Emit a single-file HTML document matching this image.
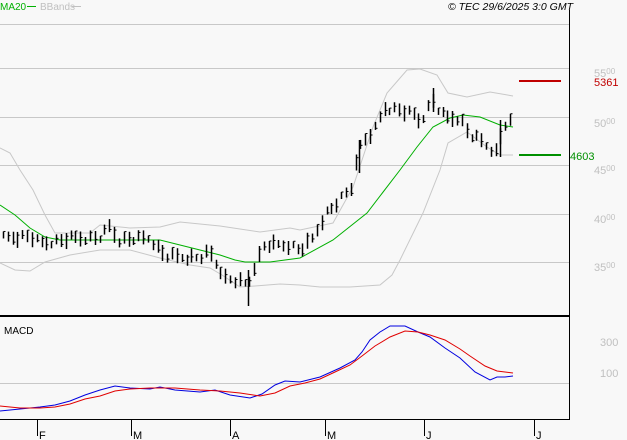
<!DOCTYPE html>
<html><head><meta charset="utf-8"><style>
html,body{margin:0;padding:0;background:#f8f8f8;width:627px;height:440px;overflow:hidden}
svg{display:block}
text{font-family:"Liberation Sans",sans-serif}
</style></head><body>
<svg id="s" width="627" height="440" xmlns="http://www.w3.org/2000/svg">
<rect width="627" height="440" fill="#f8f8f8"/>
<g stroke="#c8c8c8" stroke-width="1">
<line x1="0" y1="24.5" x2="569" y2="24.5"/>
<line x1="0" y1="68.5" x2="569" y2="68.5"/>
<line x1="0" y1="117.5" x2="569" y2="117.5"/>
<line x1="0" y1="165.5" x2="569" y2="165.5"/>
<line x1="0" y1="214.5" x2="569" y2="214.5"/>
<line x1="0" y1="262.5" x2="569" y2="262.5"/>
<line x1="0" y1="383.5" x2="569" y2="383.5"/>
</g>
<line x1="569.5" y1="10" x2="569.5" y2="420" stroke="#000"/>
<line x1="0" y1="316" x2="569" y2="316" stroke="#000" stroke-width="2"/>
<line x1="0" y1="419.5" x2="569" y2="419.5" stroke="#000"/>
<g stroke="#000"><line x1="37.5" y1="420" x2="37.5" y2="436"/><line x1="131.5" y1="420" x2="131.5" y2="436"/><line x1="230.5" y1="420" x2="230.5" y2="436"/><line x1="325.5" y1="420" x2="325.5" y2="436"/><line x1="424.5" y1="420" x2="424.5" y2="436"/><line x1="534.5" y1="420" x2="534.5" y2="436"/></g>
<g font-size="11" fill="#000"><text x="39" y="439">F</text><text x="133" y="439">M</text><text x="232" y="439">A</text><text x="327" y="439">M</text><text x="426" y="439">J</text><text x="536" y="439">J</text></g>
<text x="0" y="10" font-size="10" fill="#00b000">MA20</text><line x1="27" y1="6.5" x2="36" y2="6.5" stroke="#00b000"/>
<text x="40" y="10" font-size="10" fill="#c0c0c0">BBands</text><line x1="72" y1="6.5" x2="81" y2="6.5" stroke="#c0c0c0"/>
<text x="573" y="10" font-size="10.5" font-style="italic" text-anchor="end" fill="#000">© TEC 29/6/2025 3:0 GMT</text>
<text x="4" y="334" font-size="10" fill="#000">MACD</text>
<g font-size="11" fill="#c0c0c0"><text x="594" y="77">55<tspan font-size="8" dy="-3">00</tspan></text><text x="594" y="127">50<tspan font-size="8" dy="-3">00</tspan></text><text x="594" y="174">45<tspan font-size="8" dy="-3">00</tspan></text><text x="594" y="223">40<tspan font-size="8" dy="-3">00</tspan></text><text x="594" y="271">35<tspan font-size="8" dy="-3">00</tspan></text><text x="600" y="346">300</text><text x="600" y="377">100</text></g>
<line x1="519" y1="81" x2="561" y2="81" stroke="#c00000" stroke-width="2"/><text x="594" y="86" font-size="11" fill="#c00000">5361</text>
<line x1="519" y1="155" x2="561" y2="155" stroke="#009000" stroke-width="2"/><text x="570" y="160" font-size="11" fill="#009000">4603</text>
<polyline fill="none" stroke="#c8c8c8" points="0,148 10,153 20,170 33,190 45,215 55,233 90,233 100,225 130,228 160,227 180,222 220,226 260,232 290,228 300,230 333,223 353,187 373,127 387,93 407,70 420,69 437,75 448,93 467,97 490,92 513,96"/>
<polyline fill="none" stroke="#c8c8c8" points="0,263 15,270 30,271 45,262 70,255 100,250 130,250 160,258 190,265 210,268 222,275 240,287 255,286 280,284 300,285 320,287 350,287 380,285 392,275 400,260 423,213 440,170 448,143 467,132 487,147 500,155 513,155"/>
<polyline fill="none" stroke="#00b000" points="0,205 15,215 30,228 45,237 60,240 90,240 130,240 160,240 180,245 200,250 220,255 235,260 245,262 270,262 300,258 333,240 367,213 400,170 417,147 433,127 450,118 463,115 480,117 500,125 513,127"/>
<polyline fill="none" stroke="#0000e0" points="0,411 20,409 40,407 55,405 70,401 85,395 100,390 115,386 130,388 150,389 160,387 175,390 200,392 215,390 230,395 250,398 262,394 275,385 285,381 300,382 320,377 340,368 355,360 362,352 370,340 380,332 390,326 405,326 418,332 430,337 445,348 460,358 475,372 490,380 497,377 505,377 513,376"/>
<polyline fill="none" stroke="#e00000" points="0,406 20,408 40,408 55,407 70,404 85,399 100,396 115,391 130,389 150,388 175,388 200,390 220,391 240,393 260,396 275,393 290,386 305,383 320,379 335,372 350,365 362,356 375,346 390,337 405,331 418,332 430,335 445,340 460,349 470,356 485,366 497,371 505,372 513,373"/>
<g id="bars" stroke="#000" stroke-width="1.5"></g>
</svg>
<script>
(function(){
var k=[[3,238],[30,236],[40,243],[60,241],[70,238],[100,238],[110,226],[118,240],[150,238],[165,256],[200,258],[210,252],[225,278],[240,282],[248,285],[255,265],[265,245],[290,245],[300,250],[312,240],[325,215],[340,200],[352,188],[358,150],[365,140],[375,130],[385,108],[400,110],[415,115],[420,122],[433,100],[440,112],[447,118],[460,118],[470,135],[480,140],[490,148],[497,152],[503,125],[513,122]];
function f(x){for(var i=0;i<k.length-1;i++){if(x<=k[i+1][0]){var t=(x-k[i][0])/(k[i+1][0]-k[i][0]);return k[i][1]+t*(k[i+1][1]-k[i][1]);}}return k[k.length-1][1];}
var g=document.getElementById('bars'),h='';
for(var i=0;i<106;i++){var x=Math.round(3+i*4.83)+0.5;var m=f(x)+((i*37)%7-3);var r=7+((i*13)%10);var y1=m-r/2,y2=m+r/2;var c=y1+((i*17)%5)/5*r;
h+='<line x1="'+x+'" y1="'+y1+'" x2="'+x+'" y2="'+y2+'"/><line x1="'+x+'" y1="'+c+'" x2="'+(x+2)+'" y2="'+c+'" stroke-width="1"/>';}
h+='<line x1="248.5" y1="270" x2="248.5" y2="306"/><line x1="359.5" y1="140" x2="359.5" y2="173"/><line x1="500.5" y1="120" x2="500.5" y2="157"/><line x1="433.5" y1="88" x2="433.5" y2="112"/>';
g.innerHTML=h;
})();
</script>
</body></html>
